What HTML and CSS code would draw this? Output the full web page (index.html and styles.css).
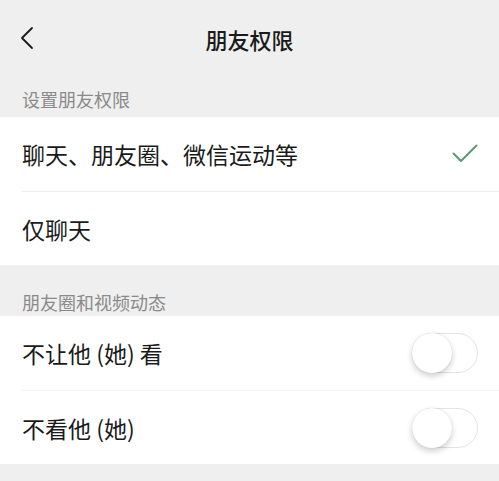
FILE: index.html
```html
<!DOCTYPE html>
<html>
<head>
    <title>朋友权限</title>
    <meta charset="utf-8">
    <link rel="stylesheet" href="styles.css">
</head>
<body>

<div class="navbar">
    <svg class="back" width="14" height="24" viewBox="0 0 14 24">
        <path d="M12 2 L2 12 L12 22" fill="none" stroke="#1a1a1a" stroke-width="1.8" stroke-linecap="round" stroke-linejoin="round"/>
    </svg>
    <div class="title">朋友权限</div>
</div>

<div class="section-label first">设置朋友权限</div>
<div class="group">
    <div class="row">
        <span>聊天、朋友圈、微信运动等</span>
        <svg class="check" width="26" height="20" viewBox="0 0 26 20">
            <path d="M1.5 9.5 L9 17 L24.5 1.5" fill="none" stroke="#5a9a72" stroke-width="2" stroke-linecap="round" stroke-linejoin="round"/>
        </svg>
    </div>
    <div class="row">
        <span>仅聊天</span>
    </div>
</div>

<div class="section-label">朋友圈和视频动态</div>
<div class="group">
    <div class="row">
        <span>不让他 (她) 看</span>
        <div class="switch"><div class="knob"></div></div>
    </div>
    <div class="row">
        <span>不看他 (她)</span>
        <div class="switch"><div class="knob"></div></div>
    </div>
</div>

</body>
</html>
```

FILE: styles.css
```css
body {
    margin: 0px;
    background-color: #efefef;
    font-family: "Noto Sans CJK SC", "Noto Sans", sans-serif;
    color: #1a1a1a;
}

.navbar {
    position: relative;
    height: 78px;
    display: flex;
    align-items: center;
    justify-content: center;
}

.back {
    position: absolute;
    left: 20px;
    top: 26px;
}

.title {
    font-size: 22px;
    font-weight: 500;
}

.section-label {
    font-size: 18px;
    color: #8a8a8a;
    padding: 12px 22px 0px 22px;
    height: 39px;
    box-sizing: border-box;
}

.section-label.first {
    padding-top: 8px;
}

.group {
    background-color: #ffffff;
    margin-bottom: 12px;
}

.row {
    height: 74px;
    margin-left: 22px;
    padding-right: 21px;
    display: flex;
    align-items: center;
    justify-content: space-between;
    font-size: 23px;
    border-top: 1px solid #f0f0f0;
    box-sizing: border-box;
}

.row:first-child {
    border-top: none;
}

.check {
    margin-right: 0px;
}

.switch {
    width: 64px;
    height: 38px;
    border: 1.5px solid #e4e4e4;
    border-radius: 20px;
    position: relative;
    background-color: #ffffff;
}

.knob {
    position: absolute;
    left: -1px;
    top: -1px;
    width: 40px;
    height: 40px;
    border-radius: 50%;
    background-color: #ffffff;
    box-shadow: 0px 3px 6px rgba(0, 0, 0, 0.2), 0px 0px 1px rgba(0, 0, 0, 0.15);
}
```
